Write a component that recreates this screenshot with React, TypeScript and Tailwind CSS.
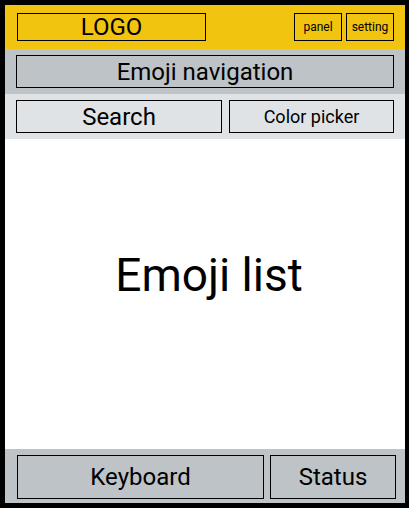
import React from "react";

export default function App() {
  const font = { fontFamily: "Roboto, 'Noto Sans', sans-serif" };
  return (
    <div
      className="w-[409px] h-[508px] bg-black pt-[5px] pl-[5px] pr-[4px] pb-[5px] text-black"
      style={font}
    >
      <div className="flex flex-col h-full w-full">
        {/* header */}
        <div className="h-[44px] bg-[#f1c40f] flex items-center pl-[12px] pr-[11px]">
          <div className="w-[189px] h-[28px] border border-black flex items-center justify-center text-[24px] leading-none">
            LOGO
          </div>
          <div className="flex-1" />
          <div className="flex gap-[4px]">
            <div className="w-[48px] h-[28px] border border-black flex items-center justify-center text-[12px] leading-none">
              panel
            </div>
            <div className="w-[48px] h-[28px] border border-black flex items-center justify-center text-[12px] leading-none">
              setting
            </div>
          </div>
        </div>
        {/* nav */}
        <div className="h-[45px] bg-[#bdc3c7] pt-[6px] px-[11px]">
          <div className="h-[33px] border border-black flex items-center justify-center text-[24px] leading-none">
            Emoji navigation
          </div>
        </div>
        {/* search row */}
        <div className="h-[45px] bg-[#dfe3e6] pt-[6px] pl-[11px] pr-[11px] flex gap-[7px]">
          <div className="w-[206px] h-[33px] border border-black flex items-center justify-center text-[24px] leading-none">
            Search
          </div>
          <div className="flex-1 h-[33px] border border-black flex items-center justify-center text-[18px] leading-none">
            Color picker
          </div>
        </div>
        {/* list */}
        <div className="h-[310px] bg-white flex items-center justify-center pb-[38px] pl-[8px] text-[46px] leading-none">
          Emoji list
        </div>
        {/* footer */}
        <div className="flex-1 bg-[#bdc3c7] pt-[6px] pl-[12px] pr-[9px] flex gap-[6px]">
          <div className="w-[247px] h-[44px] border border-black flex items-center justify-center text-[24px] leading-none">
            Keyboard
          </div>
          <div className="flex-1 h-[44px] border border-black flex items-center justify-center text-[24px] leading-none">
            Status
          </div>
        </div>
      </div>
    </div>
  );
}
